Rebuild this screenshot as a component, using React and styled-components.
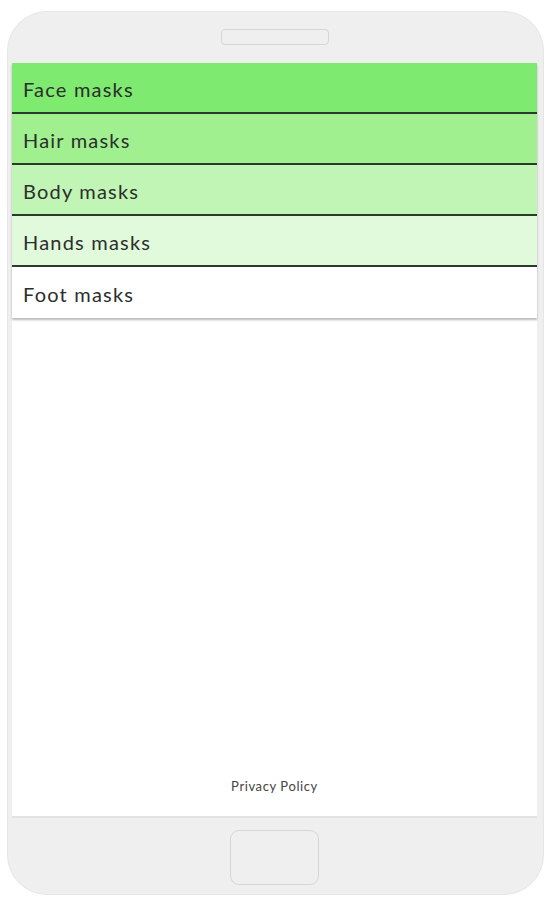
import React from 'react'
import styled, { createGlobalStyle } from 'styled-components'

const GlobalStyle = createGlobalStyle`
  html, body {
    margin: 0;
    padding: 0;
    background: #fff;
    font-family: Lato, "Open Sans", sans-serif;
  }
`

const Phone = styled.div`
  box-sizing: border-box;
  width: 537px;
  height: 884px;
  margin: 11px 0 0 7px;
  background: #efefef;
  border: 1px solid #e6e6e6;
  border-radius: 40px;
  display: flex;
  flex-direction: column;
  align-items: center;
  padding: 17px 6px 9px 4px;
`

const Speaker = styled.div`
  box-sizing: border-box;
  width: 108px;
  height: 16px;
  border: 1.5px solid #d6d6d6;
  border-radius: 4px;
  margin-bottom: 18px;
  flex-shrink: 0;
`

const Screen = styled.div`
  box-sizing: border-box;
  align-self: stretch;
  flex: 1;
  background: #fff;
  border-bottom: 2px solid #e3e3e3;
  display: flex;
  flex-direction: column;
`

const Menu = styled.ul`
  list-style: none;
  margin: 0;
  padding: 0;
  box-shadow: 0 2px 2px rgba(0, 0, 0, 0.28);
`

const Item = styled.li`
  box-sizing: border-box;
  height: 51px;
  padding: 3px 0 0 11px;
  display: flex;
  align-items: center;
  font-size: 20px;
  letter-spacing: 1.2px;
  color: #2d2d2d;
  background: ${({ bg }) => bg};
  border-bottom: ${({ last }) => (last ? 'none' : '2px solid #2b3a2b')};
`

const Footer = styled.div`
  margin-top: auto;
  padding-bottom: 22px;
  text-align: center;
  font-size: 13px;
  color: #444;
  letter-spacing: 0.6px;
`

const HomeButton = styled.div`
  box-sizing: border-box;
  width: 89px;
  height: 55px;
  margin-top: 12px;
  border: 1.5px solid #d6d6d6;
  border-radius: 9px;
  flex-shrink: 0;
`

const items = [
  { name: 'Face masks', bg: '#7eea70' },
  { name: 'Hair masks', bg: '#a0f08f' },
  { name: 'Body masks', bg: '#c1f5b5' },
  { name: 'Hands masks', bg: '#e1fadc' },
  { name: 'Foot masks', bg: '#ffffff' },
]

export default function App() {
  return (
    <>
      <GlobalStyle />
      <Phone>
        <Speaker />
        <Screen>
          <Menu>
            {items.map((item, index) => (
              <Item key={item.name} bg={item.bg} last={index === items.length - 1}>
                {item.name}
              </Item>
            ))}
          </Menu>
          <Footer>Privacy Policy</Footer>
        </Screen>
        <HomeButton />
      </Phone>
    </>
  )
}
